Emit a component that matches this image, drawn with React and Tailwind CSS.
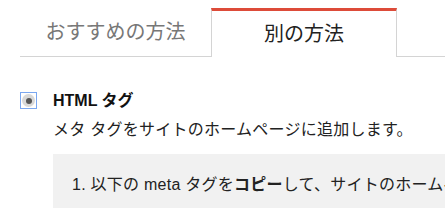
export default function App() {
  const jp = { fontFamily: '"Liberation Sans", "Noto Sans CJK JP", sans-serif' };
  return (
    <div className="w-[445px] h-[208px] overflow-hidden bg-white text-[#222]" style={jp}>
      {/* tabs */}
      <div className="flex pl-5 pt-2">
        <div className="w-[191px] h-[49px] border-b border-[#d4d4d4] flex items-center justify-center text-[20px] text-[#777]">
          おすすめの方法
        </div>
        <div className="w-[186px] h-[49px] border-t-[3px] border-t-[#dd4b39] border-x border-x-[#d4d4d4] bg-white flex items-center justify-center text-[20px] text-[#222]">
          別の方法
        </div>
        <div className="flex-1 h-[49px] border-b border-[#d4d4d4]" />
      </div>

      {/* option */}
      <div className="flex pl-5 pt-[34px]">
        <div className="w-[17px] h-[17px] border border-[#7aa7f0] bg-white flex items-center justify-center mt-[1px]">
          <div className="w-[13px] h-[13px] rounded-full bg-[#d8d8d8] flex items-center justify-center">
            <div className="w-[6px] h-[6px] rounded-full bg-[#555]" />
          </div>
        </div>
        <div className="ml-4 flex-1 min-w-0">
          <div className="text-[16px] font-bold leading-[20px] text-[#111]">HTML タグ</div>
          <div className="text-[16px] leading-[20px] mt-[9px] whitespace-nowrap tracking-[0.25px]">
            メタ タグをサイトのホームページに追加します。
          </div>
          <div className="mt-[14px] bg-[#f1f1f1] h-[60px] pt-[21px] pl-[19px] whitespace-nowrap text-[16px] leading-[20px] tracking-[0.25px]">
            1. 以下の meta タグを<b>コピー</b>して、サイトのホームページに貼り付けます。
          </div>
        </div>
      </div>
    </div>
  );
}
